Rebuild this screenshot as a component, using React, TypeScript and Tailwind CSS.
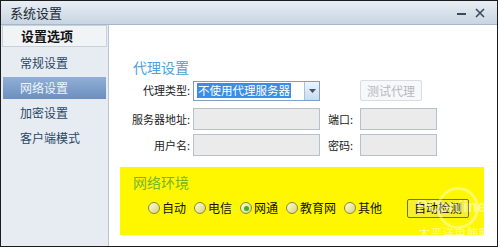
import React from "react";

const cjk = { fontFamily: '"Noto Sans CJK SC", "Noto Sans", sans-serif' };

function Radio({ label, checked }: { label: string; checked?: boolean }) {
  return (
    <div className="flex items-center gap-[2px]">
      <div className="w-[12px] h-[12px] rounded-full border border-[#8a8a30] bg-gradient-to-br from-[#fffde0] to-[#d8d27a] flex items-center justify-center">
        {checked && <div className="w-[5px] h-[5px] rounded-full bg-[#3fae2a]" />}
      </div>
      <span className="text-[12px] leading-[20px] text-[#111] whitespace-nowrap">{label}</span>
    </div>
  );
}

export default function App() {
  return (
    <div className="w-[500px] h-[249px] bg-white overflow-hidden" style={cjk}>
      <div className="relative w-[498px] h-[247px] border border-[#1c1c1c] flex flex-col bg-white">
        {/* title bar */}
        <div className="h-[24px] shrink-0 flex items-center justify-between border-b border-[#a8b7c7] bg-gradient-to-b from-[#e8eef4] to-[#c8d5e2] pl-[9px] pr-[12px]">
          <span className="text-[13px] text-[#1b2734]">系统设置</span>
          <div className="flex items-center gap-[9px]">
            <div className="w-[9px] h-[2px] bg-[#3b4b5c] mt-[2px]" />
            <svg width="10" height="10" viewBox="0 0 10 10">
              <path d="M1 1 L9 9 M9 1 L1 9" stroke="#3b4b5c" strokeWidth="1.6" />
            </svg>
          </div>
        </div>
        {/* body */}
        <div className="flex flex-1 min-h-0">
          <div className="w-[108px] shrink-0 bg-[#e6ecf2] border-r border-[#b7c5d4] flex flex-col">
            <div className="h-[22px] mx-[1px] border border-[#c6d1dc] bg-[#f1f4f7] flex items-center pl-[18px]">
              <span className="text-[13px] font-bold text-[#111]">设置选项</span>
            </div>
            <div className="mt-[5px] flex flex-col gap-[3px]">
              <div className="h-[22px] flex items-center pl-[19px] text-[12px] text-[#2a4766]">常规设置</div>
              <div className="h-[22px] mx-[2px] flex items-center pl-[17px] text-[12px] text-[#eef4fb] bg-gradient-to-b from-[#92b0d6] to-[#6b8fbf]">网络设置</div>
              <div className="h-[22px] flex items-center pl-[19px] text-[12px] text-[#2a4766]">加密设置</div>
              <div className="h-[22px] flex items-center pl-[19px] text-[12px] text-[#2a4766]">客户端模式</div>
            </div>
          </div>
          {/* content */}
          <div className="flex-1 pl-[11px] pt-[32px]">
            <div className="pl-[9px]">
              <div className="pl-[4px] text-[14px] leading-[20px] text-[#4aa2dc]">代理设置</div>
              <div className="mt-[3px] h-[21px] flex items-center">
                <div className="w-[61px] text-right text-[11px] text-[#222] whitespace-nowrap">代理类型:</div>
                <div className="ml-[3px] w-[127px] h-[20px] border border-[#7f9fc8] bg-white flex items-center">
                  <div className="flex-1 pl-[3px] flex items-center">
                    <span className="bg-[#3a8ee6] text-white text-[11.5px] leading-[15px] px-[1px] whitespace-nowrap">不使用代理服务器</span>
                  </div>
                  <div className="w-[15px] h-full border-l border-[#a9c0dc] bg-gradient-to-b from-[#eef4fb] to-[#c9daee] flex items-center justify-center">
                    <svg width="7" height="4" viewBox="0 0 7 4"><path d="M0 0 L7 0 L3.5 4 Z" fill="#3d5570" /></svg>
                  </div>
                </div>
                <div className="w-[40px]" />
                <div className="w-[62px] h-[21px] border border-[#d7dde3] rounded-[2px] bg-[#f7f8f9] flex items-center justify-center text-[12px] text-[#b4b9be]">测试代理</div>
              </div>
              <div className="mt-[7px] h-[22px] flex items-center">
                <div className="w-[61px] text-right text-[11px] text-[#222] whitespace-nowrap">服务器地址:</div>
                <div className="ml-[3px] w-[127px] h-[22px] border border-[#b7c1cb] bg-[#ebebeb]" />
                <div className="ml-[8px] w-[32px] text-[11px] text-[#222] whitespace-nowrap">端口:</div>
                <div className="w-[77px] h-[22px] border border-[#b7c1cb] bg-[#ebebeb]" />
              </div>
              <div className="mt-[4px] h-[22px] flex items-center">
                <div className="w-[61px] text-right text-[11px] text-[#222] whitespace-nowrap">用户名:</div>
                <div className="ml-[3px] w-[127px] h-[22px] border border-[#b7c1cb] bg-[#ebebeb]" />
                <div className="ml-[8px] w-[32px] text-[11px] text-[#222] whitespace-nowrap">密码:</div>
                <div className="w-[77px] h-[22px] border border-[#b7c1cb] bg-[#ebebeb]" />
              </div>
            </div>
            <div className="mt-[11px] w-[364px] h-[68px] bg-[#fff700] pl-[13px] pt-[5px]">
              <div className="text-[14px] leading-[20px] text-[#74b62a]">网络环境</div>
              <div className="mt-[6px] pl-[15px] flex items-center gap-[8px]">
                <Radio label="自动" />
                <Radio label="电信" />
                <Radio label="网通" checked />
                <Radio label="教育网" />
                <Radio label="其他" />
                <div className="ml-[17px] w-[62px] h-[19px] border border-[#6f6f50] rounded-[2px] flex items-center justify-center text-[12px] text-[#111] bg-[#f6ee30]">自动检测</div>
              </div>
            </div>
          </div>
        </div>
        {/* watermark */}
        <div className="absolute left-[416px] top-[186px] w-[78px] h-[58px] pointer-events-none">
          <div className="absolute left-[20px] top-[0px] w-[42px] h-[42px] rounded-full border-[3px] border-white/40" />
          <div className="absolute left-0 top-[10px] text-[16px] font-bold text-white/50 leading-[20px] whitespace-nowrap" style={{ fontFamily: '"Liberation Sans", Arial, sans-serif' }}>PConline</div>
          <div className="absolute left-[2px] top-[38px] text-[11px] leading-[14px] tracking-[1px] text-white/60 whitespace-nowrap">太平洋电脑网</div>
        </div>
      </div>
    </div>
  );
}
